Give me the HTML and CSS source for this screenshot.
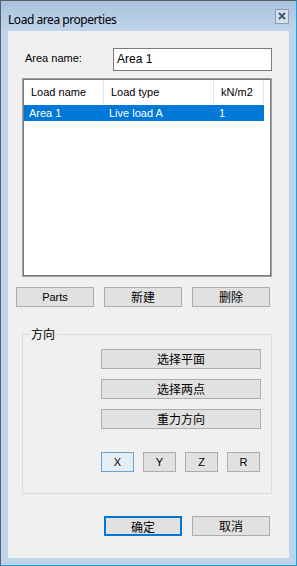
FILE: index.html
```html
<!DOCTYPE html>
<html lang="en">
<head>
  <meta charset="UTF-8">
  <title>Load area properties</title>
  <link rel="stylesheet" href="styles.css">
</head>
<body>
  <div class="window">
    <div class="titlebar">
      <span class="title">Load area properties</span>
      <span class="close">
        <svg width="8" height="8" viewBox="0 0 8 8"><path d="M1 1L7 7M7 1L1 7" stroke="#4d5a6b" stroke-width="2"/></svg>
      </span>
    </div>

    <div class="client">
      <div class="name-row">
        <label class="name-label">Area name:</label>
        <div class="textbox">Area 1</div>
      </div>

      <div class="listview">
        <div class="lv-header">
          <div class="lv-col c1">Load name</div>
          <div class="lv-col c2">Load type</div>
          <div class="lv-col c3">kN/m2</div>
        </div>
        <div class="lv-row selected">
          <div class="lv-cell c1">Area 1</div>
          <div class="lv-cell c2">Live load A</div>
          <div class="lv-cell c3">1</div>
        </div>
      </div>

      <div class="btn-row">
        <button class="btn latin">Parts</button>
        <button class="btn">新建</button>
        <button class="btn">删除</button>
      </div>

      <fieldset class="group">
        <legend>方向</legend>
        <div class="dir-buttons">
          <button class="btn wide">选择平面</button>
          <button class="btn wide">选择两点</button>
          <button class="btn wide">重力方向</button>
        </div>
        <div class="axis-buttons">
          <button class="btn axis latin focused">X</button>
          <button class="btn axis latin">Y</button>
          <button class="btn axis latin">Z</button>
          <button class="btn axis latin">R</button>
        </div>
      </fieldset>

      <div class="dialog-buttons">
        <button class="btn default">确定</button>
        <button class="btn">取消</button>
      </div>
    </div>
  </div>
</body>
</html>
```

FILE: styles.css
```css
body {
  margin: 0;
  font-family: "Liberation Sans", "Noto Sans CJK SC", sans-serif;
  font-size: 11px;
  color: #000;
}

.window {
  width: 297px;
  height: 566px;
  box-sizing: border-box;
  border: 1px solid;
  border-color: #56606b #1ba1e2 #1ba1e2 #56606b;
  background: #bfd4ea;
}

.titlebar {
  height: 30px;
  display: flex;
  align-items: center;
  justify-content: space-between;
  padding: 0 7px;
  background: linear-gradient(#a9c3df, #bfd4ea);
}

.title {
  font-family: "Noto Sans", sans-serif;
  font-size: 12px;
  letter-spacing: -0.45px;
  margin-top: 6px;
  color: #000;
}

.close {
  width: 14px;
  height: 15px;
  box-sizing: border-box;
  border: 1px solid #8c9db1;
  background: #d3e0ee;
  display: flex;
  align-items: center;
  justify-content: center;
}

.client {
  height: 527px;
  margin: 0 7px;
  background: #f0f0f0;
  overflow: hidden;
}

/* area name */
.name-row {
  display: flex;
  align-items: flex-start;
  margin-top: 17px;
  padding-left: 17px;
}

.name-label {
  width: 88px;
  padding-top: 4px;
}

.textbox {
  width: 159px;
  height: 23px;
  box-sizing: border-box;
  border: 1px solid #7a7a7a;
  background: #fff;
  padding-left: 3px;
  line-height: 21px;
  font-size: 12px;
}

/* list */
.listview {
  width: 250px;
  height: 199px;
  box-sizing: border-box;
  margin: 7px 0 0 14px;
  border: 1px solid #a0a0a0;
  box-shadow: inset 0 0 0 1px #7a7a7a;
  padding: 1px;
  background: #fff;
}

.lv-header {
  display: flex;
  height: 25px;
}

.lv-col {
  box-sizing: border-box;
  padding-left: 7px;
  line-height: 24px;
  border-right: 1px solid #e5e5e5;
}

.c1 { width: 80px; }
.c2 { width: 110px; }
.c3 { width: 50px; }

.lv-row {
  display: flex;
  height: 16px;
  width: 240px;
}

.lv-cell {
  box-sizing: border-box;
  padding-left: 5px;
  line-height: 16px;
}

.lv-row.selected {
  background: #0078d7;
  color: #fff;
}

/* buttons */
.btn {
  height: 20px;
  box-sizing: border-box;
  border: 1px solid #adadad;
  background: #e1e1e1;
  font-family: "Noto Sans CJK SC", sans-serif;
  font-size: 12px;
  padding: 0;
  line-height: 18px;
  color: #000;
}

.btn.latin {
  font-family: "Liberation Sans", sans-serif;
  font-size: 11px;
}

.btn-row {
  display: flex;
  gap: 10px;
  margin-top: 10px;
  padding-left: 8px;
}

.btn-row .btn,
.dialog-buttons .btn {
  width: 78px;
}

.group {
  width: 250px;
  box-sizing: border-box;
  margin: 20px 0 0 14px;
  padding: 0 0 21px;
  border: 1px solid #dcdcdc;
  min-width: 0;
}

.group legend {
  margin-left: 6px;
  padding: 0 2px;
  font-family: "Noto Sans CJK SC", sans-serif;
  font-size: 12px;
  line-height: 14px;
}

.dir-buttons {
  display: flex;
  flex-direction: column;
  gap: 10px;
  margin: 8px 0 0 78px;
}

.btn.wide {
  width: 160px;
}

.axis-buttons {
  display: flex;
  gap: 9px;
  margin: 23px 0 0 78px;
}

.btn.axis {
  width: 33px;
}

.btn.focused {
  border-color: #6c9fd2;
  background: #e5edf5;
}

.dialog-buttons {
  display: flex;
  gap: 10px;
  margin-top: 22px;
  padding-left: 96px;
}

.btn.default {
  border: 2px solid #0078d7;
}
```
